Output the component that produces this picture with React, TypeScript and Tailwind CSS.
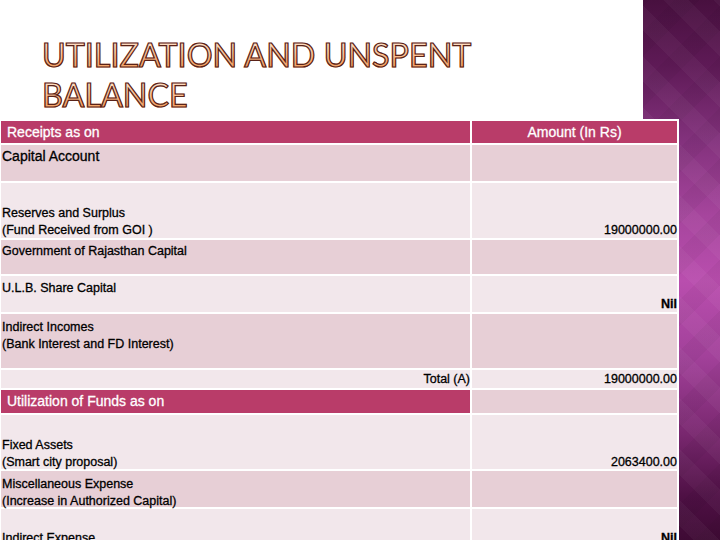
import React from "react";

const font = "font-['Liberation_Sans',Arial,sans-serif]";
const dark = "bg-[#e7cfd6]";
const light = "bg-[#f2e7eb]";
const head = "bg-[#b93c69]";

const Cell = ({
  bg,
  className = "",
  children,
}: {
  bg: string;
  className?: string;
  children?: React.ReactNode;
}) => <div className={`${bg} flex flex-col ${className}`}>{children}</div>;

const App = () => {
  return (
    <div className={`relative w-[720px] h-[540px] overflow-hidden bg-white ${font}`}>
      {/* purple side panel */}
      <div className="absolute right-0 top-0 h-full w-[77px] bg-[linear-gradient(180deg,#48103f_0%,#5e1a56_12%,#80307a_25%,#a6459d_40%,#b94eae_52%,#a2419a_66%,#7a2870_80%,#4e1044_92%,#3e0a34_100%)]">
        <div className="h-full w-full bg-[repeating-linear-gradient(45deg,rgba(255,255,255,0.035)_0_18px,transparent_18px_36px),repeating-linear-gradient(-45deg,rgba(0,0,0,0.035)_0_18px,transparent_18px_36px)]" />
      </div>

      <div className="relative">
        <h1 className="pt-[35px] pl-[42px] pr-[200px] font-['Lato','Liberation_Sans',sans-serif] text-[32.3px] leading-[40px] font-normal">
          <span className="box-decoration-clone bg-[linear-gradient(180deg,#ffeede_0%,#fcd2ae_35%,#f6ab72_70%,#ef9b58_100%)] bg-clip-text text-transparent [-webkit-text-stroke:1.2px_#5a2218]">
            UTILIZATION AND UNSPENT BALANCE
          </span>
        </h1>

        <div className="mt-[4px] w-[679px] bg-white pl-[1px] pr-[2px] pt-[2px] grid grid-cols-[469px_205px] grid-rows-[22px_36px_55px_34px_36px_54px_18px_23px_54px_36px_36px] gap-[2px] text-[12.5px] leading-[16.5px] text-black [-webkit-text-stroke:0.3px_#000]">
          <Cell bg={head} className="justify-center pl-[6px] text-white text-[14px] [-webkit-text-stroke:0.3px_#fff]">
            Receipts as on
          </Cell>
          <Cell bg={head} className="justify-center items-center text-white text-[14px] [-webkit-text-stroke:0.3px_#fff]">
            Amount (In Rs)
          </Cell>

          <Cell bg={dark} className="pt-[3px] pl-[1px] text-[14px] leading-[16px]">
            Capital Account
          </Cell>
          <Cell bg={dark} />

          <Cell bg={light} className="justify-end pl-[1px]">
            <span>Reserves and Surplus</span>
            <span>(Fund Received from GOI )</span>
          </Cell>
          <Cell bg={light} className="justify-end items-end">
            19000000.00
          </Cell>

          <Cell bg={dark} className="pt-[3px] pl-[1px]">
            Government of Rajasthan Capital
          </Cell>
          <Cell bg={dark} />

          <Cell bg={light} className="pt-[4px] pl-[1px]">
            U.L.B. Share Capital
          </Cell>
          <Cell bg={light} className="justify-end items-end font-bold">
            Nil
          </Cell>

          <Cell bg={dark} className="pt-[5px] pl-[1px]">
            <span>Indirect Incomes</span>
            <span>(Bank Interest and FD Interest)</span>
          </Cell>
          <Cell bg={dark} />

          <Cell bg={light} className="justify-center items-end">
            Total (A)
          </Cell>
          <Cell bg={light} className="justify-center items-end">
            19000000.00
          </Cell>

          <Cell bg={head} className="justify-center pl-[6px] text-white text-[14px] [-webkit-text-stroke:0.3px_#fff]">
            Utilization of Funds as on
          </Cell>
          <Cell bg={dark} />

          <Cell bg={light} className="pt-[22px] pl-[1px]">
            <span>Fixed Assets</span>
            <span>(Smart city proposal)</span>
          </Cell>
          <Cell bg={light} className="pt-[39px] items-end">
            2063400.00
          </Cell>

          <Cell bg={dark} className="pt-[5px] pl-[1px]">
            <span>Miscellaneous Expense</span>
            <span>(Increase in Authorized Capital)</span>
          </Cell>
          <Cell bg={dark} />

          <Cell bg={light} className="pt-[21px] pl-[1px]">
            Indirect Expense
          </Cell>
          <Cell bg={light} className="pt-[21px] items-end font-bold">
            Nil
          </Cell>
        </div>
      </div>
    </div>
  );
};

export default App;
